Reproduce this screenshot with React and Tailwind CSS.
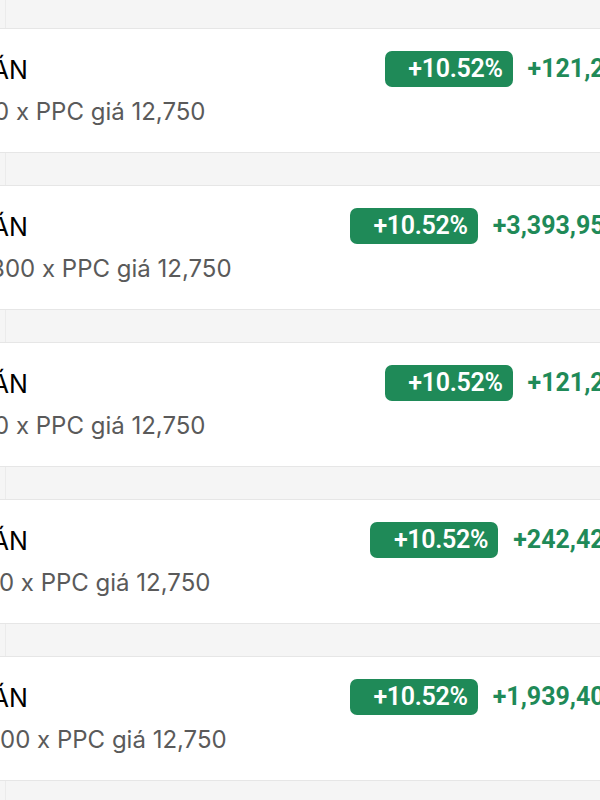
const trades = [
  { qty: '100', profit: '+121,275.0' },
  { qty: '2,800', profit: '+3,393,950.00' },
  { qty: '100', profit: '+121,275.0' },
  { qty: '200', profit: '+242,425.00' },
  { qty: '1,600', profit: '+1,939,400.00' },
];

function TradeRow({ qty, profit }) {
  return (
    <div className="h-[125px] bg-white border-y border-[#e6e6e6] overflow-hidden">
      <div className="w-[736px] -ml-[81px] flex justify-between">
        <div className="flex flex-col pt-[23px] font-['Inter','Liberation_Sans',sans-serif]">
          <div className="text-[25px] leading-[36px] text-black">ĐẶT BÁN</div>
          <div className="mt-[6px] text-[24px] leading-[36px] text-[#5a5a5a]">
            Bán {qty} x PPC giá 12,750
          </div>
        </div>
        <div className="flex items-start pt-[22px] font-['Roboto','Liberation_Sans',sans-serif]">
          <div className="w-[128px] h-[36px] rounded-[7px] bg-[#1f8a58] flex items-center justify-end pr-[10px] text-white text-[25px] font-semibold tracking-[-0.3px]">
            +10.52%
          </div>
          <div className="ml-[15px] leading-[36px] text-[25px] font-bold text-[#1f8a58] whitespace-nowrap">
            {profit}
          </div>
        </div>
      </div>
    </div>
  );
}

export default function App() {
  return (
    <div className="w-[600px] h-[800px] bg-[#f5f5f5] overflow-hidden">
      <div className="h-[28px] border-l border-[#ebebeb] ml-[5px]" />
      {trades.map((t, i) => (
        <div key={i}>
          <TradeRow {...t} />
          <div className="h-[32px] border-l border-[#ebebeb] ml-[5px]" />
        </div>
      ))}
    </div>
  );
}
